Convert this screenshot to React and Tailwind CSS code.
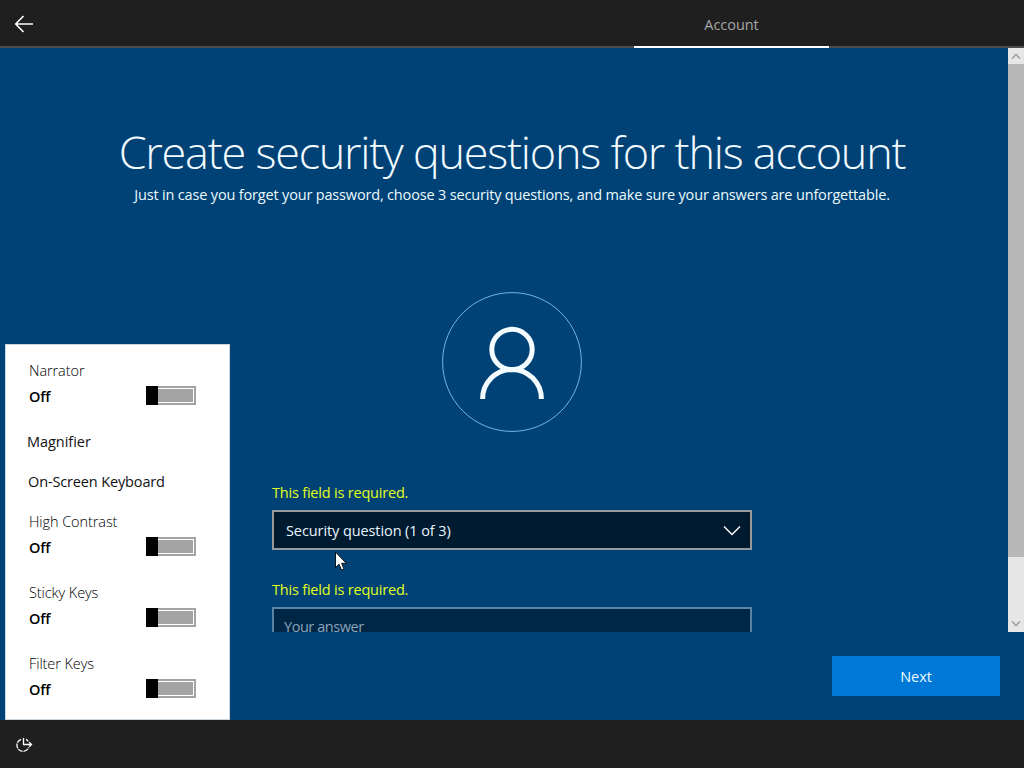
const toggles = (name) => (
  <div key={name} className="h-[71px] pl-[23px] text-[14.5px] text-black">
    <div className="h-[26px] leading-[20px] font-light tracking-[-0.08px]"><span>{name}</span></div>
    <div className="flex h-[20px] items-start">
      <span className="w-[117px] leading-[20px] font-semibold tracking-[-0.2px]">Off</span>
      <span className="-mt-px flex h-[19px] w-[50px] bg-[#a3a3a3]">
        <span className="w-[12px] bg-black" />
        <span className="my-[2px] mr-[2px] flex-1 border border-l-0 border-white" />
      </span>
    </div>
  </div>
);

function Header() {
  return (
    <header className="flex h-[48px] border-b-2 border-[#4c4c4c] bg-[#1f1f1f]">
      <div className="w-[634px] pt-[14px] pl-[14px]">
        <svg width="20" height="20" viewBox="0 0 20 20" fill="none" stroke="#fff" strokeWidth="1.6">
          <path d="M19 10H2M9.5 2L1.7 10L9.5 18" />
        </svg>
      </div>
      <div className="flex h-[48px] w-[195px] justify-center border-b-2 border-white pt-[15px] text-[14.5px] leading-[20px] tracking-[-0.05px] text-[#a6a6a6]">
        <span>Account</span>
      </div>
    </header>
  );
}

function Scrollbar() {
  return (
    <div className="flex w-[16px] flex-col bg-[#e6e6e6]">
      <div className="flex h-[16px] items-center justify-center">
        <svg width="10" height="7" viewBox="0 0 10 7" fill="none" stroke="#999" strokeWidth="1.3"><path d="M1 5.5L5 1.5L9 5.5" /></svg>
      </div>
      <div className="h-[493px] bg-[#b8b8b8]" />
      <div className="flex flex-1 items-end justify-center pb-[5px]">
        <svg width="10" height="7" viewBox="0 0 10 7" fill="none" stroke="#999" strokeWidth="1.3"><path d="M1 1.5L5 5.5L9 1.5" /></svg>
      </div>
    </div>
  );
}

function Panel() {
  return (
    <aside className="absolute bottom-0 left-[5px] h-[376px] w-[225px] overflow-hidden border border-[#ccd6df] bg-white pt-[16px]">
      {toggles("Narrator")}
      <div className="h-[40px] pl-[21px] text-[14.5px] leading-[20px] tracking-[-0.04px] text-[#111]"><span>Magnifier</span></div>
      <div className="h-[40px] pl-[22px] text-[14.5px] leading-[20px] tracking-[-0.14px] text-[#111]"><span>On-Screen Keyboard</span></div>
      {["High Contrast", "Sticky Keys", "Filter Keys"].map(toggles)}
    </aside>
  );
}

export default function App() {
  return (
    <div className="flex h-[768px] w-[1024px] flex-col overflow-hidden bg-[#004275] font-['Open_Sans',sans-serif]">
      <Header />
      <main className="relative flex h-[672px] flex-col">
        <div className="flex h-[584px] overflow-hidden">
          <div className="flex w-[1008px] flex-col overflow-hidden pl-[16px]">
            <h1 className="mt-[74px] h-[60px] text-center text-[45px] leading-[60px] font-light tracking-[-1.24px] whitespace-nowrap text-[#f2fbff]"><span>Create security questions for this account</span></h1>
            <p className="mt-[3px] h-[20px] text-center text-[14.5px] leading-[20px] tracking-[-0.17px] whitespace-nowrap text-[#eafaff]"><span>Just in case you forget your password, choose 3 security questions, and make sure your answers are unforgettable.</span></p>
            <svg className="mt-[87px] ml-[426px] shrink-0" width="140" height="140" viewBox="0 0 140 140" fill="none">
              <circle cx="70" cy="70" r="69.4" stroke="#77b2de" strokeWidth="1" />
              <circle cx="70" cy="57.5" r="20.2" stroke="#f4fcff" strokeWidth="5" />
              <path d="M40.6 107A29.4 29.6 0 0 1 99.4 107" stroke="#f4fcff" strokeWidth="5" />
            </svg>
            <div className="ml-[256px] w-[480px] pt-[51px] text-[14.5px] leading-[20px]">
              <p className="h-[27px] tracking-[-0.2px] text-[#e3ff1c]"><span>This field is required.</span></p>
              <div className="flex h-[40px] items-start justify-between border-2 border-[#999] bg-[#001a2f] pt-[9px] pr-[9px] pl-[12px] tracking-[-0.09px] text-[#e6f6ff]">
                <span>Security question (1 of 3)</span>
                <svg className="mt-[4px]" width="18" height="11" viewBox="0 0 18 11" fill="none" stroke="#fff" strokeWidth="1.4"><path d="M1 1.5L9 9.5L17 1.5" /></svg>
              </div>
              <p className="mt-[30px] h-[27px] tracking-[-0.2px] text-[#e3ff1c]"><span>This field is required.</span></p>
              <div className="flex h-[40px] items-start border-2 border-[#5c83a3] bg-[#002646] pt-[8px] pl-[10px] tracking-[-0.45px] text-[#88a5bd]"><span>Your answer</span></div>
            </div>
          </div>
          <Scrollbar />
        </div>
        <div className="flex justify-end pt-[24px] pr-[24px]">
          <button className="h-[40px] w-[168px] bg-[#0078d7] pt-[2px] text-[14.5px] leading-[20px] tracking-[-0.1px] text-[#ecfbff]"><span>Next</span></button>
        </div>
        <Panel />
        <svg className="absolute top-[503px] left-[334px]" width="14" height="21" viewBox="0 0 14 21"><path d="M1.5 1V16.5L5 13.2L7.5 19L10 18L7.6 12.3H12.3Z" fill="#fff" stroke="#111" strokeWidth="1" /></svg>
      </main>
      <footer className="h-[48px] bg-[#1f1f1f] pt-[17px] pl-[15px]">
        <svg width="18" height="16" viewBox="0 0 18 16" fill="none" stroke="#fff" strokeWidth="1.3">
          <path d="M8.5 1V7.5H16.5M14.2 5.2L16.5 7.5L14.2 9.800" />
          <path d="M6 2.300A6.200 6.200 0 1 0 13.800 10.500M11 2.300Q12.500 3 13.300 4.300" strokeDasharray="5 0.900" />
        </svg>
      </footer>
    </div>
  );
}
